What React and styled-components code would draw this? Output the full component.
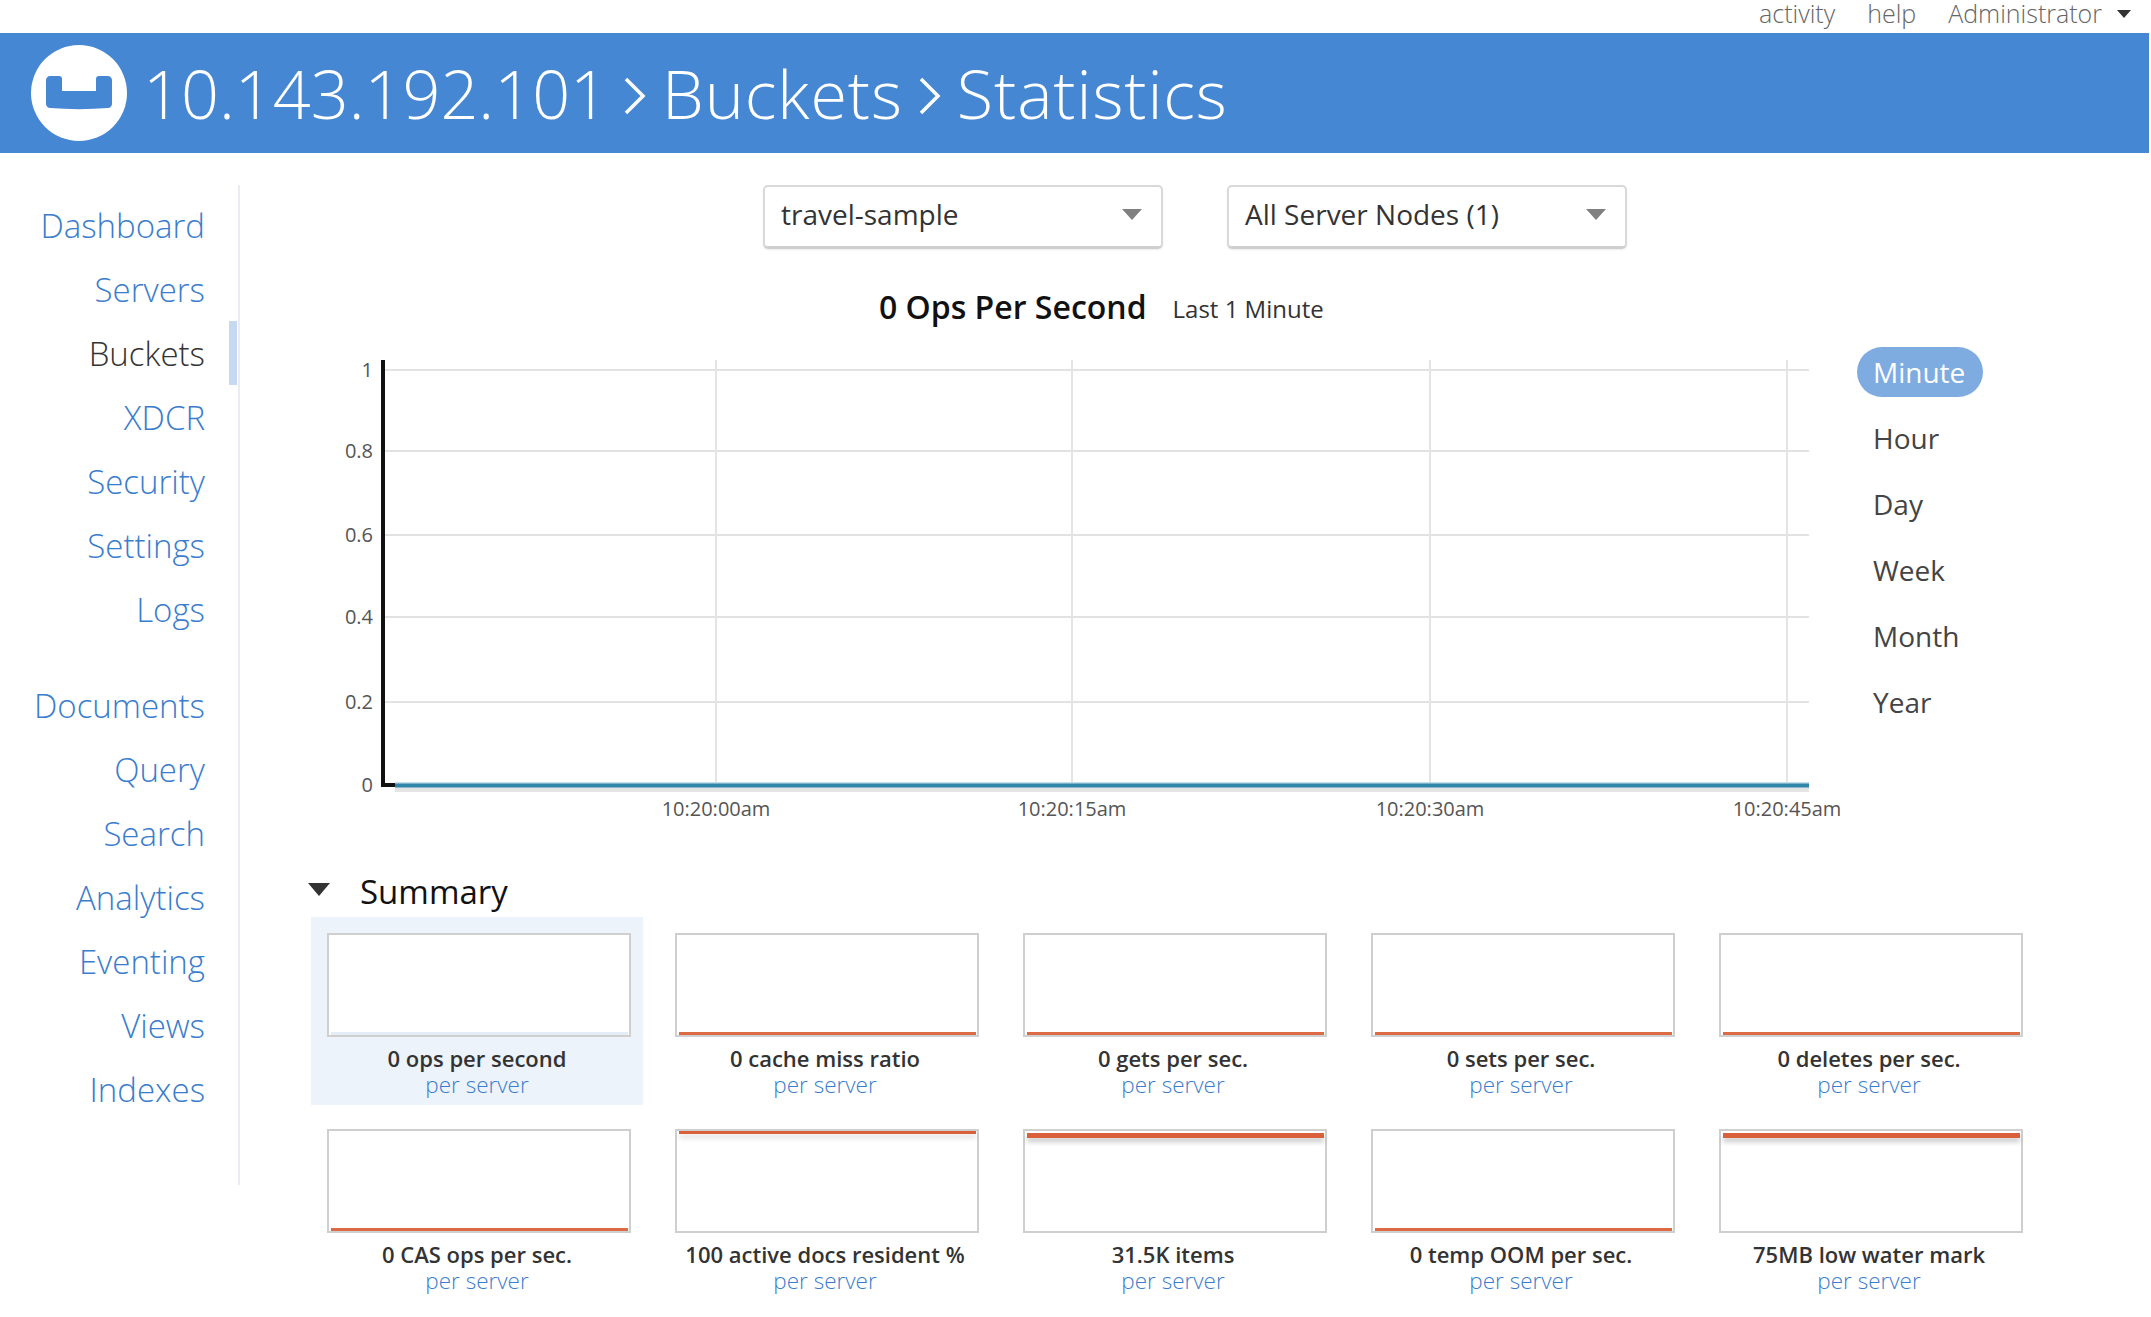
import React from 'react';
import styled, { createGlobalStyle } from 'styled-components';

const GlobalStyle = createGlobalStyle`
  html, body {
    margin: 0;
    padding: 0;
    background: #fff;
    font-family: "Open Sans", "Liberation Sans", sans-serif;
    color: #333;
  }
`;

const primaryNav = ['Dashboard', 'Servers', 'Buckets', 'XDCR', 'Security', 'Settings', 'Logs'];
const secondaryNav = ['Documents', 'Query', 'Search', 'Analytics', 'Eventing', 'Views', 'Indexes'];
const ranges = ['Minute', 'Hour', 'Day', 'Week', 'Month', 'Year'];

const yTicks = [
  { label: '1', y: 370 },
  { label: '0.8', y: 451 },
  { label: '0.6', y: 535 },
  { label: '0.4', y: 617 },
  { label: '0.2', y: 702 },
  { label: '0', y: 785 },
];

const xTicks = [
  { label: '10:20:00am', x: 716 },
  { label: '10:20:15am', x: 1072 },
  { label: '10:20:30am', x: 1430 },
  { label: '10:20:45am', x: 1787 },
];

const tiles = [
  { label: '0 ops per second', line: 'faint', selected: true },
  { label: '0 cache miss ratio', line: 'bottom' },
  { label: '0 gets per sec.', line: 'bottom' },
  { label: '0 sets per sec.', line: 'bottom' },
  { label: '0 deletes per sec.', line: 'bottom' },
  { label: '0 CAS ops per sec.', line: 'bottom' },
  { label: '100 active docs resident %', line: 'top' },
  { label: '31.5K items', line: 'thick' },
  { label: '0 temp OOM per sec.', line: 'bottom' },
  { label: '75MB low water mark', line: 'thick' },
];

const Page = styled.div`
  width: 2151px;
  height: 1317px;
  overflow: hidden;
`;

const TopBar = styled.div`
  height: 33px;
  display: flex;
  justify-content: flex-end;
  align-items: flex-start;
  gap: 32px;
  padding-right: 20px;
  font-size: 25px;
  font-weight: 300;
  color: #666;
`;

const TopLink = styled.span`
  height: 33px;
  line-height: 27px;
  display: flex;
  align-items: flex-start;
`;

const TopCaret = styled.i`
  width: 0;
  height: 0;
  margin: 10px 0 0 15px;
  border-left: 7px solid transparent;
  border-right: 7px solid transparent;
  border-top: 8px solid #333;
`;

const Header = styled.header`
  height: 120px;
  margin-right: 2px;
  background: #4687d3;
  display: flex;
  align-items: center;
  padding-left: 31px;
  gap: 16px;
`;

const Title = styled.h1`
  margin: 0;
  display: flex;
  align-items: center;
  gap: 16px;
  font-size: 66.5px;
  font-weight: 300;
  line-height: 1;
  color: #fff;
  white-space: nowrap;
`;

const Crumb = styled.span`
  letter-spacing: ${(p) => (p.$word ? '0.9px' : '0')};
`;

const Chevron = styled.svg`
  display: block;
  flex: none;
  width: 22px;
  height: 38px;
  margin-top: 6px;
`;

const Body = styled.div`
  display: flex;
  align-items: flex-start;
`;

const Sidebar = styled.nav`
  width: 238px;
  margin-top: 32px;
  padding: 8px 0 64px;
  border-right: 2px solid #e9edf1;
`;

const NavGroup = styled.div`
  & + & {
    margin-top: 32px;
  }
`;

const NavItem = styled.a`
  display: block;
  height: 64px;
  line-height: 66px;
  padding-right: 24px;
  text-align: right;
  font-size: 33px;
  font-weight: 300;
  color: ${(p) => (p.$active ? '#333' : '#3a7dcc')};
  border-right: 8px solid ${(p) => (p.$active ? '#c5d9f1' : 'transparent')};
  margin-right: 1px;
`;

const Main = styled.main`
  flex: 1;
  padding-top: 32px;
`;

const SelectRow = styled.div`
  display: flex;
  gap: 64px;
  padding-left: 523px;
`;

const Select = styled.div`
  width: 400px;
  height: 64px;
  box-sizing: border-box;
  display: flex;
  align-items: center;
  justify-content: space-between;
  padding: 0 19px 5px 16px;
  border: 2px solid #d9d9d9;
  border-bottom: 3px solid #cfcfcf;
  border-radius: 5px;
  font-size: 28px;
  font-weight: 400;
  color: #333;
  box-shadow: 0 1px 2px rgba(0, 0, 0, 0.08);
`;

const SelectCaret = styled.i`
  width: 0;
  height: 0;
  border-left: 10px solid transparent;
  border-right: 10px solid transparent;
  border-top: 11px solid #808080;
`;

const StatHeading = styled.div`
  height: 48px;
  margin-top: 33px;
  padding-left: 639px;
  display: flex;
  align-items: center;
  gap: 26px;
`;

const StatValue = styled.span`
  font-size: 32px;
  font-weight: 600;
  color: #111;
`;

const StatSpan = styled.span`
  font-size: 24px;
  font-weight: 400;
  color: #333;
  padding-top: 5px;
`;

const ChartRow = styled.div`
  display: flex;
  margin-top: 17px;
  padding-left: 60px;
`;

const ChartSvg = styled.svg`
  display: block;
  flex: none;
  width: 1540px;
  height: 490px;
  font-family: "Open Sans", "Liberation Sans", sans-serif;
`;

const RangeList = styled.div`
  margin-left: 17px;
  display: flex;
  flex-direction: column;
  align-items: flex-start;
  gap: 16px;
`;

const RangeItem = styled.span`
  height: 50px;
  line-height: 50px;
  padding: 0 18px 0 16px;
  border-radius: 25px;
  font-size: 28px;
  color: ${(p) => (p.$active ? '#fff' : '#444')};
  background: ${(p) => (p.$active ? '#7eabe0' : 'transparent')};
`;

const SummaryHeading = styled.div`
  height: 40px;
  margin-top: 34px;
  padding-left: 68px;
  display: flex;
  align-items: center;
  gap: 30px;
  font-size: 33px;
  font-weight: 500;
  color: #111;
`;

const SummaryCaret = styled.i`
  width: 0;
  height: 0;
  margin-bottom: 4px;
  border-left: 11px solid transparent;
  border-right: 11px solid transparent;
  border-top: 13px solid #333;
`;

const TileGrid = styled.div`
  display: grid;
  grid-template-columns: repeat(5, 332px);
  gap: 8px 16px;
  margin: 6px 0 0 71px;
`;

const Tile = styled.div`
  height: 188px;
  box-sizing: border-box;
  padding: 16px 12px 0 16px;
  background: ${(p) => (p.$selected ? '#ecf3fb' : 'transparent')};
  text-align: center;
`;

const MiniChart = styled.div`
  width: 304px;
  height: 104px;
  box-sizing: border-box;
  margin-bottom: 7px;
  padding: 0 1px 0 2px;
  border: 2px solid #cfcfcf;
  background: #fff;
  display: flex;
  align-items: ${(p) => (p.$line === 'top' || p.$line === 'thick' ? 'flex-start' : 'flex-end')};
`;

const lineStyles = {
  faint: 'height: 3px; background: #e3edf6;',
  bottom: 'height: 3px; background: #dc6a45;',
  top: 'height: 3px; background: #d9603a; box-shadow: 0 4px 5px rgba(0, 0, 0, 0.16);',
  thick: 'height: 5px; margin-top: 2px; background: #d9603a; box-shadow: 0 4px 5px rgba(0, 0, 0, 0.22);',
};

const MiniLine = styled.div`
  flex: 1;
  ${(p) => lineStyles[p.$line]}
`;

const TileLabel = styled.div`
  margin-left: -16px;
  margin-right: -12px;
  line-height: 28px;
  font-size: 22px;
  font-weight: 600;
  color: #333;
  white-space: nowrap;
`;

const TileLink = styled(TileLabel)`
  line-height: 25px;
  font-size: 22.5px;
  font-weight: 300;
  color: #3a7dcc;
`;

const Logo = () => (
  <svg width="96" height="96" viewBox="0 0 96 96" aria-hidden="true">
    <circle cx="48" cy="48" r="48" fill="#fff" />
    <path
      d="M19 31h9c2 0 3 1 3 3v12h34V34c0-2 1-3 3-3h9c2 0 4 2 4 4v24c0 2-2 4-4 4-19 1.500-39 1.500-58 0-2 0-4-2-4-4V35c0-2 2-4 4-4z"
      fill="#4687d3"
    />
  </svg>
);

const Separator = () => (
  <Chevron viewBox="0 0 22 38" aria-hidden="true">
    <path d="M2 2l17 17L2 36" fill="none" stroke="#fff" strokeWidth="3.500" />
  </Chevron>
);

const StatsChart = () => (
  <ChartSvg viewBox="300 347 1540 490" aria-hidden="true">
    {yTicks.slice(0, 5).map((t) => (
      <line key={t.y} x1="384" x2="1809" y1={t.y} y2={t.y} stroke="#e2e2e2" strokeWidth="2" />
    ))}
    {xTicks.map((t) => (
      <line key={t.x} x1={t.x} x2={t.x} y1="360" y2="785" stroke="#e4e4e4" strokeWidth="2" />
    ))}
    <rect x="395" y="787" width="1414" height="5" fill="#e4e4e4" />
    <rect x="395" y="782" width="1414" height="2" fill="#c5dfe8" />
    <rect x="395" y="783.500" width="1414" height="4" fill="#2f86aa" />
    <path d="M383 360V785H395" fill="none" stroke="#111" strokeWidth="4" />
    {yTicks.map((t) => (
      <text key={t.label} x="373" y={t.y + 7} textAnchor="end" fontSize="20" fill="#555">
        {t.label}
      </text>
    ))}
    {xTicks.map((t) => (
      <text key={t.label} x={t.x} y="816" textAnchor="middle" fontSize="20" fill="#555">
        {t.label}
      </text>
    ))}
  </ChartSvg>
);

export default function App() {
  return (
    <Page>
      <GlobalStyle />
      <TopBar>
        <TopLink>activity</TopLink>
        <TopLink>help</TopLink>
        <TopLink>
          Administrator
          <TopCaret />
        </TopLink>
      </TopBar>
      <Header>
        <Logo />
        <Title>
          <Crumb>10.143.192.101</Crumb>
          <Separator />
          <Crumb $word>Buckets</Crumb>
          <Separator />
          <Crumb $word>Statistics</Crumb>
        </Title>
      </Header>
      <Body>
        <Sidebar>
          <NavGroup>
            {primaryNav.map((item) => (
              <NavItem key={item} $active={item === 'Buckets'}>
                {item}
              </NavItem>
            ))}
          </NavGroup>
          <NavGroup>
            {secondaryNav.map((item) => (
              <NavItem key={item}>{item}</NavItem>
            ))}
          </NavGroup>
        </Sidebar>
        <Main>
          <SelectRow>
            <Select>
              travel-sample
              <SelectCaret />
            </Select>
            <Select>
              All Server Nodes (1)
              <SelectCaret />
            </Select>
          </SelectRow>
          <StatHeading>
            <StatValue>0 Ops Per Second</StatValue>
            <StatSpan>Last 1 Minute</StatSpan>
          </StatHeading>
          <ChartRow>
            <StatsChart />
            <RangeList>
              {ranges.map((r) => (
                <RangeItem key={r} $active={r === 'Minute'}>
                  {r}
                </RangeItem>
              ))}
            </RangeList>
          </ChartRow>
          <SummaryHeading>
            <SummaryCaret />
            Summary
          </SummaryHeading>
          <TileGrid>
            {tiles.map((t) => (
              <Tile key={t.label} $selected={t.selected}>
                <MiniChart $line={t.line}>
                  <MiniLine $line={t.line} />
                </MiniChart>
                <TileLabel>{t.label}</TileLabel>
                <TileLink>per server</TileLink>
              </Tile>
            ))}
          </TileGrid>
        </Main>
      </Body>
    </Page>
  );
}
